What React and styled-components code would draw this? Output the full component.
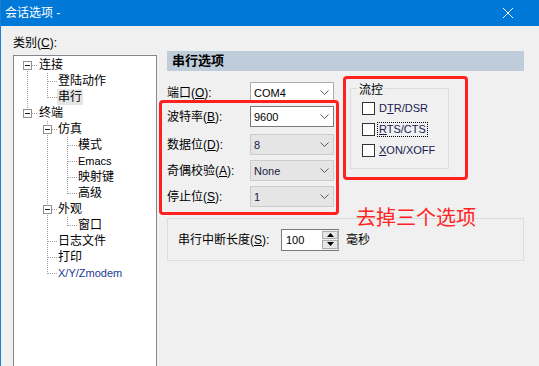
import React from 'react'
import styled, { createGlobalStyle } from 'styled-components'

const GlobalStyle = createGlobalStyle`
  html, body {
    margin: 0;
    padding: 0;
    background: #f0f0f0;
  }
  body {
    font-family: "Liberation Sans", "Noto Sans CJK SC", sans-serif;
    font-size: 12px;
    color: #000;
  }
`

const Page = styled.div`
  position: relative;
  width: 539px;
  height: 366px;
  overflow: hidden;
  box-sizing: border-box;
  border-left: 1px solid #1a7fd6;
  background: #f0f0f0;
  display: flex;
  flex-direction: column;
`

const TitleBar = styled.div`
  height: 26px;
  flex: none;
  background: #0078d7;
  color: #fff;
  display: flex;
  align-items: center;
  justify-content: space-between;
  padding: 0 26px 0 4px;
  font-size: 12px;
  line-height: 16px;
`

const Body = styled.div`
  flex: 1;
  display: flex;
  padding-left: 12px;
  gap: 10px;
`

const LeftCol = styled.div`
  width: 144px;
  padding-top: 9px;
  display: flex;
  flex-direction: column;
`

const Caption = styled.div`
  line-height: 16px;
  margin-bottom: 4px;
`

const TreeBox = styled.div`
  height: 320px;
  box-sizing: border-box;
  border: 1px solid #828790;
  background: #fff;
  padding: 1px 0 0 3px;
`

const TreeRow = styled.div`
  height: 16px;
  display: flex;
  align-items: center;
`

const TreeText = styled.span`
  margin-left: ${p => (p.$first ? 1 : 0)}px;
  padding: 0 1px;
  line-height: 16px;
  font-size: ${p => (p.$latin ? 11 : 12)}px;
  color: ${p => (p.$blue ? '#1c3a96' : '#000')};
  background: ${p => (p.$selected ? '#e5e5e5' : 'transparent')};
`

const RightCol = styled.div`
  width: 357px;
  padding-top: 25px;
  display: flex;
  flex-direction: column;
`

const PanelHeader = styled.div`
  height: 20px;
  background: #bfcddb;
  font-weight: bold;
  font-size: 13px;
  line-height: 20px;
  padding-left: 5px;
`

const TopSection = styled.div`
  display: flex;
  margin-top: 11px;
`

const FieldList = styled.div`
  width: 167px;
  display: flex;
  flex-direction: column;
`

const FieldRow = styled.div`
  display: flex;
  align-items: center;
  height: 21px;
  margin-top: ${p => p.$mt || 0}px;
`

const FieldLabel = styled.label`
  width: 83px;
  line-height: 16px;
`

const U = styled.span`
  text-decoration: underline;
`

const SelectBox = styled.div`
  width: 84px;
  height: 21px;
  box-sizing: border-box;
  display: flex;
  align-items: center;
  justify-content: space-between;
  padding: 0 4px 0 3px;
  font-size: 11px;
  color: ${p => (p.$tone === 'disabled' ? '#1a1a40' : '#000')};
  background: ${p => (p.$tone === 'disabled' ? '#e5e5e5' : '#fff')};
  border: 1px solid
    ${p => (p.$tone === 'focus' ? '#7a7a7a' : p.$tone === 'disabled' ? '#cccccc' : '#adadad')};
`

const FlowGroup = styled.div`
  position: relative;
  margin: 6px 0 0 16px;
  width: 99px;
  height: 81px;
  box-sizing: border-box;
  border: 1px solid #dcdcdc;
  padding: 9px 0 0 11px;
  display: flex;
  flex-direction: column;
`

const GroupTitle = styled.span`
  position: absolute;
  top: -7px;
  left: 6px;
  padding: 0 2px;
  background: #f0f0f0;
  line-height: 16px;
`

const CheckRow = styled.div`
  height: 21px;
  display: flex;
  align-items: center;
  gap: 3px;
`

const CheckBox = styled.span`
  width: 13px;
  height: 13px;
  box-sizing: border-box;
  border: 1px solid #333;
  background: #fff;
`

const CheckText = styled.span`
  font-size: 11px;
  line-height: 13px;
  color: #1a1a50;
  padding: 0 1px;
  outline: ${p => (p.$focus ? '1px dotted #000' : 'none')};
`

const BreakGroup = styled.div`
  margin-top: 11px;
  height: 43px;
  box-sizing: border-box;
  border: 1px solid #dcdcdc;
  display: flex;
  align-items: center;
  padding-left: 10px;
`

const BreakLabel = styled.label`
  width: 103px;
  line-height: 16px;
`

const SpinFrame = styled.div`
  width: 58px;
  height: 22px;
  box-sizing: border-box;
  border: 1px solid #7a7a7a;
  border-right-color: #adadad;
  background: #fff;
  display: flex;
`

const SpinValue = styled.span`
  flex: 1;
  font-size: 11px;
  line-height: 20px;
  padding-left: 4px;
`

const SpinButtons = styled.div`
  width: 16px;
  display: flex;
  flex-direction: column;
  gap: 1px;
  padding: 1px 0;
  background: #f0f0f0;
`

const SpinButton = styled.div`
  flex: 1;
  box-sizing: border-box;
  border: 1px solid #adadad;
  background: #e6e6e6;
  display: flex;
  align-items: center;
  justify-content: center;
`

const Unit = styled.span`
  margin-left: 7px;
  line-height: 16px;
`

const RedBox = styled.div`
  position: absolute;
  left: ${p => p.$x}px;
  top: ${p => p.$y}px;
  width: ${p => p.$w}px;
  height: ${p => p.$h}px;
  box-sizing: border-box;
  border: 3px solid #ff2020;
  border-radius: 4px;
`

const RedNote = styled.div`
  position: absolute;
  left: 355px;
  top: 205px;
  font-family: "Noto Sans CJK SC", sans-serif;
  font-size: 20px;
  line-height: 24px;
  color: #ff2424;
`

const tree = [
  { label: '连接', children: [{ label: '登陆动作' }, { label: '串行', selected: true }] },
  {
    label: '终端',
    children: [
      {
        label: '仿真',
        children: [{ label: '模式' }, { label: 'Emacs', latin: true }, { label: '映射键' }, { label: '高级' }],
      },
      { label: '外观', children: [{ label: '窗口' }] },
      { label: '日志文件' },
      { label: '打印' },
      { label: 'X/Y/Zmodem', latin: true, blue: true },
    ],
  },
]

function flatten(nodes, guides = [], out = []) {
  nodes.forEach((n, i) => {
    const last = i === nodes.length - 1
    out.push({ ...n, guides, last, first: guides.length === 0 && i === 0 })
    if (n.children) flatten(n.children, [...guides, !last], out)
  })
  return out
}

const DOT = '#a0a0a0'

const Guide = ({ line }) => (
  <svg width="20" height="16" style={{ flex: 'none' }}>
    {line && <line x1="10.5" y1="0" x2="10.5" y2="16" stroke={DOT} strokeDasharray="1 1" shapeRendering="crispEdges" />}
  </svg>
)

const Joint = ({ first, last, expander }) => (
  <svg width="20" height="16" style={{ flex: 'none' }}>
    <line
      x1="10.5"
      y1={first ? 8 : 0}
      x2="10.5"
      y2={last ? 9 : 16}
      stroke={DOT}
      strokeDasharray="1 1"
      shapeRendering="crispEdges"
    />
    <line x1="11" y1="8.5" x2="20" y2="8.5" stroke={DOT} strokeDasharray="1 1" shapeRendering="crispEdges" />
    {expander && (
      <g shapeRendering="crispEdges">
        <rect x="6.5" y="4.5" width="8" height="8" fill="#fff" stroke="#919191" />
        <line x1="8" y1="8.5" x2="13" y2="8.5" stroke="#1a1a1a" />
      </g>
    )}
  </svg>
)

const Chevron = () => (
  <svg width="9" height="5" viewBox="0 0 9 5">
    <path d="M0.5 0.5 L4.5 4.5 L8.5 0.5" fill="none" stroke="#5a5a5a" />
  </svg>
)

const Arrow = ({ down }) => (
  <svg width="7" height="4" viewBox="0 0 7 4">
    <path d={down ? 'M0 0 H7 L3.5 4 Z' : 'M0 4 H7 L3.5 0 Z'} fill="#000" />
  </svg>
)

const fields = [
  { label: '端口', key: 'O', value: 'COM4', tone: 'plain', mt: 0 },
  { label: '波特率', key: 'B', value: '9600', tone: 'focus', mt: 3 },
  { label: '数据位', key: 'D', value: '8', tone: 'disabled', mt: 7 },
  { label: '奇偶校验', key: 'A', value: 'None', tone: 'disabled', mt: 5 },
  { label: '停止位', key: 'S', value: '1', tone: 'disabled', mt: 5 },
]

const App = () => {
  const rows = flatten(tree)
  return (
    <Page>
      <GlobalStyle />
      <TitleBar>
        <span>会话选项 -</span>
        <svg width="10" height="10" viewBox="0 0 10 10">
          <path d="M0 0 L10 10 M10 0 L0 10" stroke="#fff" strokeWidth="1" />
        </svg>
      </TitleBar>
      <Body>
        <LeftCol>
          <Caption>
            类别(<U>C</U>):
          </Caption>
          <TreeBox>
            {rows.map(r => (
              <TreeRow key={r.label}>
                {r.guides.map((g, i) => (
                  <Guide key={i} line={g} />
                ))}
                <Joint first={r.first} last={r.last} expander={!!r.children} />
                <TreeText $first={r.guides.length === 0} $latin={r.latin} $blue={r.blue} $selected={r.selected}>
                  {r.label}
                </TreeText>
              </TreeRow>
            ))}
          </TreeBox>
        </LeftCol>
        <RightCol>
          <PanelHeader>串行选项</PanelHeader>
          <TopSection>
            <FieldList>
              {fields.map(f => (
                <FieldRow key={f.key} $mt={f.mt}>
                  <FieldLabel>
                    {f.label}(<U>{f.key}</U>):
                  </FieldLabel>
                  <SelectBox $tone={f.tone}>
                    <span>{f.value}</span>
                    <Chevron />
                  </SelectBox>
                </FieldRow>
              ))}
            </FieldList>
            <FlowGroup>
              <GroupTitle>流控</GroupTitle>
              <CheckRow>
                <CheckBox />
                <CheckText>
                  D<U>T</U>R/DSR
                </CheckText>
              </CheckRow>
              <CheckRow>
                <CheckBox />
                <CheckText $focus>
                  <U>R</U>TS/CTS
                </CheckText>
              </CheckRow>
              <CheckRow>
                <CheckBox />
                <CheckText>
                  <U>X</U>ON/XOFF
                </CheckText>
              </CheckRow>
            </FlowGroup>
          </TopSection>
          <BreakGroup>
            <BreakLabel>
              串行中断长度(<U>S</U>):
            </BreakLabel>
            <SpinFrame>
              <SpinValue>100</SpinValue>
              <SpinButtons>
                <SpinButton>
                  <Arrow />
                </SpinButton>
                <SpinButton>
                  <Arrow down />
                </SpinButton>
              </SpinButtons>
            </SpinFrame>
            <Unit>毫秒</Unit>
          </BreakGroup>
        </RightCol>
      </Body>
      <RedBox $x={158} $y={100} $w={180} $h={115} />
      <RedBox $x={342} $y={76} $w={125} $h={104} />
      <RedNote>去掉三个选项</RedNote>
    </Page>
  )
}

export default App
